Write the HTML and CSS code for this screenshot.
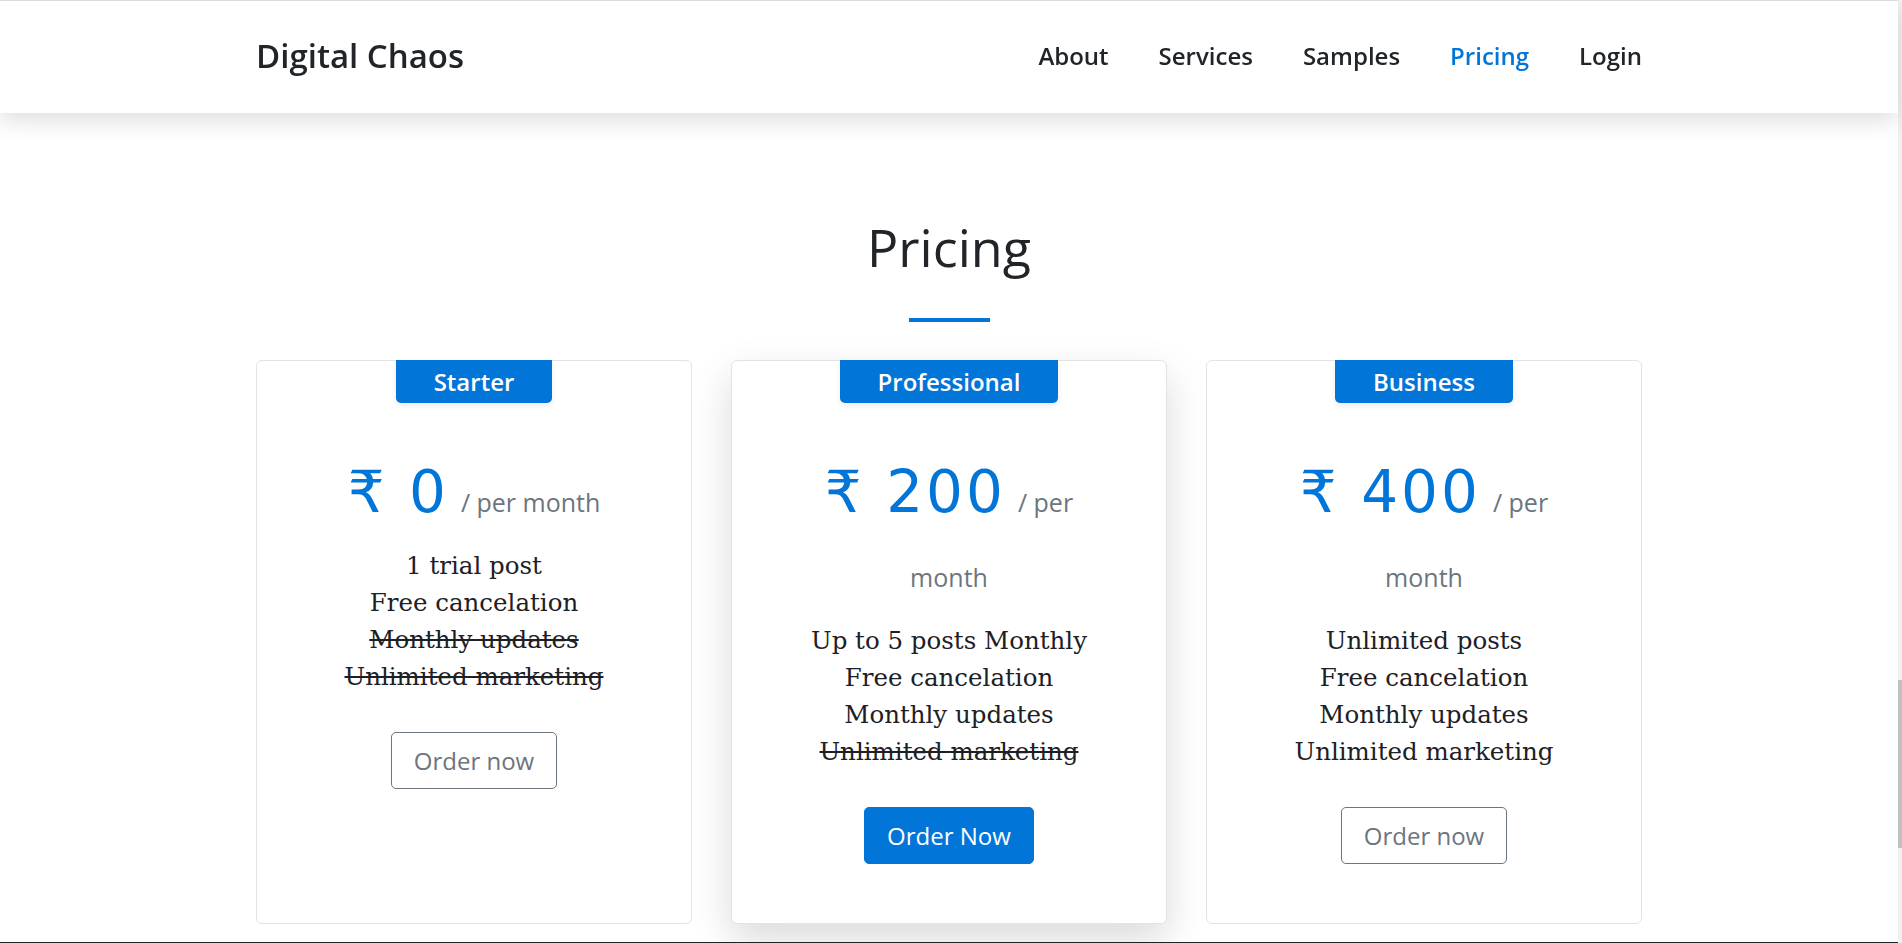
FILE: index.html
```html
<!DOCTYPE html>
<html lang="en">
<head>
<meta charset="utf-8">
<title>Digital Chaos - Pricing</title>
<link rel="stylesheet" href="styles.css">
</head>
<body>
<div class="page">
  <header class="site-header">
    <div class="container header-inner">
      <a class="brand" href="#">Digital Chaos</a>
      <nav class="nav">
        <a class="nav-link" href="#">About</a>
        <a class="nav-link" href="#">Services</a>
        <a class="nav-link" href="#">Samples</a>
        <a class="nav-link active" href="#">Pricing</a>
        <a class="nav-link" href="#">Login</a>
      </nav>
    </div>
  </header>

  <section class="pricing">
    <div class="container">
      <h1 class="section-title">Pricing</h1>
      <div class="title-rule"></div>
      <div class="cards">
        <div class="card">
          <div class="badge">Starter</div>
          <div class="price"><span class="amount">₹ 0</span><span class="per per-first">/ per</span><span class="per"> month</span></div>
          <ul class="features">
            <li>1 trial post</li>
            <li>Free cancelation</li>
            <li><s>Monthly updates</s></li>
            <li><s>Unlimited marketing</s></li>
          </ul>
          <a class="btn btn-outline" href="#">Order now</a>
        </div>
        <div class="card card-featured">
          <div class="badge">Professional</div>
          <div class="price"><span class="amount">₹ 200</span><span class="per per-first">/ per</span><span class="per"> month</span></div>
          <ul class="features">
            <li>Up to 5 posts Monthly</li>
            <li>Free cancelation</li>
            <li>Monthly updates</li>
            <li><s>Unlimited marketing</s></li>
          </ul>
          <a class="btn btn-primary" href="#">Order Now</a>
        </div>
        <div class="card">
          <div class="badge">Business</div>
          <div class="price"><span class="amount">₹ 400</span><span class="per per-first">/ per</span><span class="per"> month</span></div>
          <ul class="features">
            <li>Unlimited posts</li>
            <li>Free cancelation</li>
            <li>Monthly updates</li>
            <li>Unlimited marketing</li>
          </ul>
          <a class="btn btn-outline" href="#">Order now</a>
        </div>
      </div>
    </div>
  </section>
  <footer class="site-footer"></footer>
</div>
<div class="scrollbar"><div class="scrollbar-thumb"></div></div>
</body>
</html>
```

FILE: styles.css
```css
* { box-sizing: border-box; }

html, body {
  margin: 0;
  padding: 0;
  background: #fff;
}

body {
  font-family: "Open Sans", "Noto Sans", sans-serif;
  color: #212529;
  overflow: hidden;
}

.page {
  margin-right: 4px;
}

.container {
  width: 1386px;
  margin: 0 auto;
}

/* Header */
.site-header {
  height: 113px;
  background: #fff;
  border-top: 1px solid #dcdcdc;
  box-shadow: 0 8px 22px rgba(0, 0, 0, 0.13);
  position: relative;
  z-index: 2;
}

.header-inner {
  height: 100%;
  display: flex;
  align-items: center;
  justify-content: space-between;
}

.brand {
  font-size: 33px;
  font-weight: 600;
  color: #212529;
  text-decoration: none;
  margin-top: -4px;
}

.nav {
  display: flex;
  gap: 50px;
  margin-top: -4px;
}

.nav-link {
  font-size: 24px;
  font-weight: 600;
  color: #212529;
  text-decoration: none;
}

.nav-link.active {
  color: #0275d8;
}

/* Pricing section */
.pricing {
  padding-top: 103px;
  padding-bottom: 18px;
}

.section-title {
  margin: 0;
  font-size: 52px;
  font-weight: 400;
  line-height: 1.2;
  text-align: center;
  color: #212529;
}

.title-rule {
  width: 81px;
  height: 4px;
  background: #0275d8;
  margin: 40px auto 38px;
}

.cards {
  display: grid;
  grid-template-columns: repeat(3, 1fr);
  gap: 39px;
}

.card {
  display: flex;
  flex-direction: column;
  align-items: center;
  text-align: center;
  border: 1px solid #e1e3e6;
  border-radius: 6px;
  background: #fff;
  padding-bottom: 59px;
}

.card-featured {
  box-shadow: 0 16px 40px rgba(0, 0, 0, 0.15);
}

.badge {
  margin-top: -1px;
  background: #0275d8;
  color: #fff;
  font-size: 24px;
  font-weight: 600;
  line-height: 43px;
  height: 43px;
  padding: 0 38px;
  border-radius: 0 0 5px 5px;
  box-shadow: 0 3px 6px rgba(0, 0, 0, 0.08);
}

.price {
  margin-top: 52px;
  max-width: 300px;
  font-family: "DejaVu Sans", "Noto Sans", sans-serif;
  font-size: 58px;
  line-height: 75px;
  color: #0275d8;
}

.amount {
  letter-spacing: 3px;
}

.per {
  font-family: "Open Sans", "Noto Sans", sans-serif;
  font-size: 25px;
  line-height: 1;
  color: #6c757d;
}

.per-first {
  margin-left: 12px;
}

.features {
  list-style: none;
  margin: 17px 0 0;
  padding: 0;
  font-family: "DejaVu Serif", "Liberation Serif", serif;
  font-size: 24.5px;
  line-height: 37px;
  color: #1d2024;
}

.features s {
  text-decoration-thickness: 2px;
}

.btn {
  display: inline-block;
  margin-top: 37px;
  height: 57px;
  line-height: 55px;
  padding: 0 22px;
  font-size: 24px;
  text-decoration: none;
  border-radius: 5px;
  border: 1px solid transparent;
}

.btn-outline {
  color: #6c757d;
  border-color: #6c757d;
  background: #fff;
}

.btn-primary {
  color: #fff;
  background: #0275d8;
  border-color: #0275d8;
}

.site-footer {
  height: 200px;
  background: #212529;
}

/* Fake browser scrollbar drawn over the page edge */
.scrollbar {
  position: fixed;
  top: 0;
  right: 0;
  width: 4px;
  height: 100%;
  background: #f1f1f1;
}

.scrollbar-thumb {
  position: absolute;
  top: 680px;
  left: 0;
  width: 4px;
  height: 168px;
  background: #c1c1c1;
}
```
